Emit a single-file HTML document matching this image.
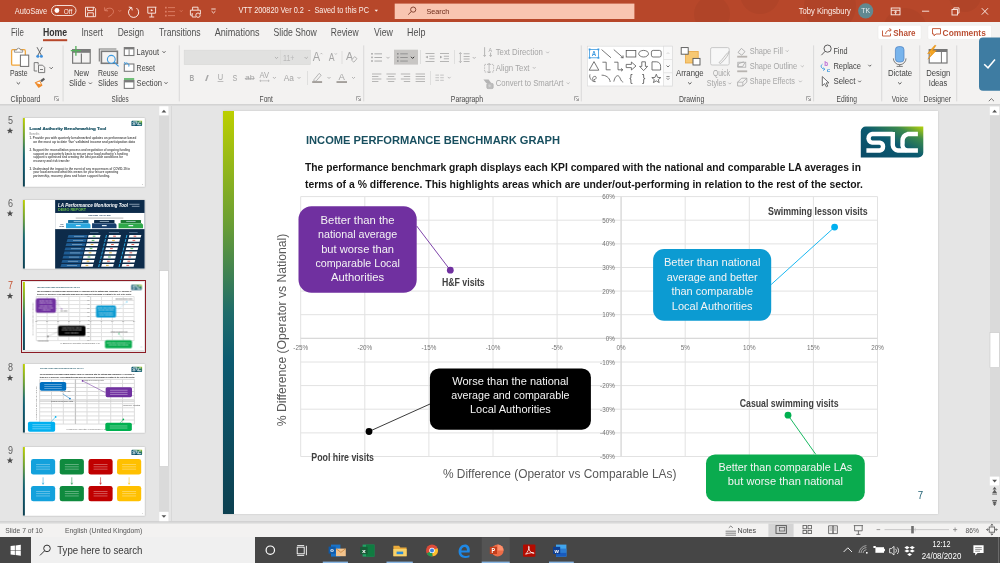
<!DOCTYPE html>
<html><head><meta charset="utf-8"><title>PowerPoint</title><style>
*{margin:0;padding:0;box-sizing:border-box}
html,body{width:1000px;height:563px;overflow:hidden;background:#e5e5e5;font-family:"Liberation Sans", sans-serif}
.a{position:absolute}
svg{position:absolute;overflow:hidden;will-change:transform}
svg text{font-family:"Liberation Sans", sans-serif}
</style></head>
<body>
<div class="a" style="left:0;top:0;width:1000px;height:22px;background:#b7472a"></div>
<div class="a" style="left:0;top:22px;width:1000px;height:82px;background:#f3f2f1"></div>
<div class="a" style="left:0;top:104px;width:1000px;height:1px;background:#d3d3d3"></div>
<div class="a" style="left:0;top:105px;width:1000px;height:1px;background:#dbdbdb"></div>
<div class="a" style="left:0;top:106px;width:1000px;height:415px;background:#e5e5e5"></div>
<div class="a" style="left:159px;top:106px;width:10px;height:415px;background:#dadada"></div>
<div class="a" style="left:171px;top:106px;width:1px;height:415px;background:#d8d8d8"></div>
<div class="a" style="left:989.5px;top:106px;width:10.5px;height:380px;background:#dadada"></div>
<div class="a" style="left:0;top:521px;width:1000px;height:1px;background:#d2d2d2"></div>
<div class="a" style="left:0;top:522px;width:1000px;height:1px;background:#d9d9d9"></div>
<div class="a" style="left:0;top:523px;width:1000px;height:1px;background:#e4e4e3"></div>
<div class="a" style="left:0;top:524px;width:1000px;height:13px;background:#f3f2f1"></div>
<div class="a" style="left:0;top:537px;width:1000px;height:26px;background:#464646"></div>
<div class="a" style="left:31px;top:537px;width:224px;height:26px;background:#f0f0f0"></div>
<svg style="left:0;top:0" width="1000" height="22" viewBox="0 0 1000 22"><g fill="#000" opacity="0.035"><circle cx="712" cy="14" r="18"/><circle cx="760" cy="-6" r="20"/><circle cx="830" cy="6" r="26"/><circle cx="905" cy="30" r="22"/><circle cx="965" cy="-4" r="16"/></g><text x="14.8" y="13.7" font-size="8.84" fill="#fbeee9" textLength="32.4" lengthAdjust="spacingAndGlyphs">AutoSave</text><rect x="51.5" y="5.5" width="24.5" height="10" rx="5" fill="none" stroke="#fbeee9" stroke-width="0.9"/><circle cx="56.9" cy="10.5" r="2.4" fill="#fff"/><text x="63.8" y="13.5" font-size="7.83" fill="#fbeee9" textLength="8.5" lengthAdjust="spacingAndGlyphs">Off</text><g fill="none" stroke="#fbeee9" stroke-width="0.9"><path d="M85.5 7.3H94.2L95.6 8.7V16.7H85.5Z"/><path d="M87.6 7.3V10.5H93.3V7.3"/><path d="M87.6 16.7V12.8H93.3V16.7"/></g><g fill="none" stroke="#dd7f66" stroke-width="1"><path d="M104.9 10.5C107 7.6 112.4 7.2 113.4 10.6C114.2 13.4 110.8 15.6 108.4 16.8"/><path d="M104.6 7.4L104.9 10.6L108 10.9"/></g><path d="M118.5 10.2L119.8 11.5L121.1 10.2" stroke="#dd7f66" stroke-width="0.8" fill="none"/><g fill="none" stroke="#fbeee9" stroke-width="1"><path d="M136.5 8.1A5.1 5.1 0 1 1 131.4 7.7"/><path d="M128.8 7.1L131.7 7.5L132.2 10.4"/></g><g fill="none" stroke="#fbeee9" stroke-width="0.9"><path d="M147 7.2H156.4M147.8 7.2V13.2H155.6V7.2M151.7 13.2V17M149.2 17H154.2"/></g><path d="M150.8 8.9L153.2 10.2L150.8 11.5Z" fill="#fbeee9"/><g fill="#dd7f66"><rect x="165" y="6.8" width="1.7" height="1.7"/><rect x="165" y="10.8" width="1.7" height="1.7"/><rect x="165" y="14.8" width="1.7" height="1.7"/><rect x="168" y="7.2" width="7" height="0.9"/><rect x="168" y="11.2" width="7" height="0.9"/><rect x="168" y="15.2" width="7" height="0.9"/></g><path d="M179.9 10.3L181.2 11.7L182.5 10.3" stroke="#dd7f66" stroke-width="0.8" fill="none"/><g fill="none" stroke="#fbeee9" stroke-width="0.9"><path d="M192.6 10V7.2H198V10"/><path d="M192 15.2H190.4V10.2H200.4V14"/><path d="M192.2 13V17H196"/><circle cx="198" cy="15.2" r="2.2"/></g><g fill="none" stroke="#fbeee9" stroke-width="0.9"><path d="M211.3 9H215.7"/><path d="M211.6 11.2L213.5 13L215.4 11.2"/></g><text x="238.4" y="13.1" font-size="8.26" fill="#fbeee9" textLength="130.6" lengthAdjust="spacingAndGlyphs">VTT 200820 Ver 0.2  -  Saved to this PC</text><path d="M374.6 9.8H378L376.3 11.8Z" fill="#fbeee9"/><rect x="394.7" y="3.6" width="239.7" height="15.4" fill="#f9c5b1"/><g fill="none" stroke="#7c3a28" stroke-width="0.9"><circle cx="413.2" cy="9.6" r="2.6"/><path d="M411.4 11.5L408.2 14.6"/></g><text x="426.4" y="13.6" font-size="8.12" fill="#6d2c1c" textLength="22.9" lengthAdjust="spacingAndGlyphs">Search</text><text x="798.7" y="13.9" font-size="8.41" fill="#fbeee9" textLength="52.1" lengthAdjust="spacingAndGlyphs">Toby Kingsbury</text><circle cx="865.7" cy="10.8" r="7.6" fill="#618991"/><text x="865.7" y="13.3" font-size="7.25" fill="#e8eef0" text-anchor="middle" textLength="8.8" lengthAdjust="spacingAndGlyphs">TK</text><g fill="none" stroke="#fbeee9" stroke-width="0.9"><rect x="891.2" y="8" width="8.8" height="6.8"/><path d="M891.2 10.3H900"/><path d="M895.6 14.6V11.2M894.2 12.5L895.6 11.2L897 12.5"/></g><path d="M922 11.2H929.2" stroke="#fbeee9" stroke-width="0.9"/><g fill="none" stroke="#fbeee9" stroke-width="0.9"><rect x="952" y="9.5" width="5.5" height="5.5"/><path d="M953.8 9.5V7.9H959V13.1H957.5"/></g><path d="M981.8 8.2L988 14.6M988 8.2L981.8 14.6" stroke="#fbeee9" stroke-width="0.95"/></svg>
<svg style="left:0;top:22px" width="1000" height="84" viewBox="0 22 1000 84"><text x="11.0" y="35.8" font-size="10.14" fill="#505050" textLength="12.8" lengthAdjust="spacingAndGlyphs">File</text><text x="42.9" y="35.8" font-size="10.14" fill="#333" font-weight="700" textLength="24.2" lengthAdjust="spacingAndGlyphs">Home</text><text x="81.4" y="35.8" font-size="10.14" fill="#505050" textLength="21.6" lengthAdjust="spacingAndGlyphs">Insert</text><text x="117.7" y="35.8" font-size="10.14" fill="#505050" textLength="26.4" lengthAdjust="spacingAndGlyphs">Design</text><text x="158.9" y="35.8" font-size="10.14" fill="#505050" textLength="41.8" lengthAdjust="spacingAndGlyphs">Transitions</text><text x="214.7" y="35.8" font-size="10.14" fill="#505050" textLength="44.9" lengthAdjust="spacingAndGlyphs">Animations</text><text x="273.6" y="35.8" font-size="10.14" fill="#505050" textLength="43.2" lengthAdjust="spacingAndGlyphs">Slide Show</text><text x="330.8" y="35.8" font-size="10.14" fill="#505050" textLength="27.8" lengthAdjust="spacingAndGlyphs">Review</text><text x="374.0" y="35.8" font-size="10.14" fill="#505050" textLength="18.9" lengthAdjust="spacingAndGlyphs">View</text><text x="407.0" y="35.8" font-size="10.14" fill="#505050" textLength="18.4" lengthAdjust="spacingAndGlyphs">Help</text><rect x="43" y="39.2" width="24.2" height="2" fill="#b7472a"/><rect x="878" y="25.3" width="43.2" height="14.1" fill="#fff" rx="1.5" stroke="#ebe9e7" stroke-width="0.6"/><rect x="927.8" y="25.3" width="63.7" height="14.1" fill="#fff" rx="1.5" stroke="#ebe9e7" stroke-width="0.6"/><g fill="none" stroke="#c0502f" stroke-width="0.9"><path d="M882.5 30.5V36H890.5V33.5"/><path d="M885.5 34C886 31 888 30 891 30M889.5 28.2L891.3 30L889.5 31.8"/></g><text x="893.2" y="35.7" font-size="9.42" fill="#bb4f33" font-weight="700" textLength="22.3" lengthAdjust="spacingAndGlyphs">Share</text><path d="M932.5 28.6H940.5V34H936L934 35.8V34H932.5Z" fill="none" stroke="#c0502f" stroke-width="0.9"/><text x="942.6" y="35.7" font-size="9.42" fill="#bb4f33" font-weight="700" textLength="43.2" lengthAdjust="spacingAndGlyphs">Comments</text><rect x="62.6" y="45.4" width="0.9" height="56" fill="#d6d6d6"/><rect x="178.8" y="45.4" width="0.9" height="56" fill="#d6d6d6"/><rect x="363.3" y="45.4" width="0.9" height="56" fill="#d6d6d6"/><rect x="580.8" y="45.4" width="0.9" height="56" fill="#d6d6d6"/><rect x="813.2" y="45.4" width="0.9" height="56" fill="#d6d6d6"/><rect x="881.3" y="45.4" width="0.9" height="56" fill="#d6d6d6"/><rect x="919.3" y="45.4" width="0.9" height="56" fill="#d6d6d6"/><rect x="956.3" y="45.4" width="0.9" height="56" fill="#d6d6d6"/><text x="10.4" y="101.5" font-size="8.55" fill="#4a4a4a" textLength="30.1" lengthAdjust="spacingAndGlyphs">Clipboard</text><text x="111.6" y="101.5" font-size="8.55" fill="#4a4a4a" textLength="17.1" lengthAdjust="spacingAndGlyphs">Slides</text><text x="259.6" y="101.5" font-size="8.55" fill="#4a4a4a" textLength="13.3" lengthAdjust="spacingAndGlyphs">Font</text><text x="450.8" y="101.5" font-size="8.55" fill="#4a4a4a" textLength="32.2" lengthAdjust="spacingAndGlyphs">Paragraph</text><text x="679.0" y="101.5" font-size="8.55" fill="#4a4a4a" textLength="25.3" lengthAdjust="spacingAndGlyphs">Drawing</text><text x="836.6" y="101.5" font-size="8.55" fill="#4a4a4a" textLength="20.4" lengthAdjust="spacingAndGlyphs">Editing</text><text x="891.7" y="101.5" font-size="8.55" fill="#4a4a4a" textLength="16.2" lengthAdjust="spacingAndGlyphs">Voice</text><text x="923.6" y="101.5" font-size="8.55" fill="#4a4a4a" textLength="27.4" lengthAdjust="spacingAndGlyphs">Designer</text><g fill="none" stroke="#8a8a8a" stroke-width="0.7"><path d="M54.5 100.5V96.5H58.5"/><path d="M55.7 97.7L58.5 100.5M58.5 98.3V100.5H56.3"/></g><g fill="none" stroke="#8a8a8a" stroke-width="0.7"><path d="M356.5 100.5V96.5H360.5"/><path d="M357.7 97.7L360.5 100.5M360.5 98.3V100.5H358.3"/></g><g fill="none" stroke="#8a8a8a" stroke-width="0.7"><path d="M574.5 100.5V96.5H578.5"/><path d="M575.7 97.7L578.5 100.5M578.5 98.3V100.5H576.3"/></g><g fill="none" stroke="#8a8a8a" stroke-width="0.7"><path d="M806.5 100.5V96.5H810.5"/><path d="M807.7 97.7L810.5 100.5M810.5 98.3V100.5H808.3"/></g><rect x="11.6" y="49.7" width="13.7" height="15.4" rx="1.2" fill="#fff" stroke="#f0a53a" stroke-width="1.3"/><path d="M14.4 52.2V50H16.8A1.8 1.8 0 0 1 20.4 50H22.7V52.2Z" fill="#fff" stroke="#8a8a8a" stroke-width="0.9"/><rect x="20.4" y="55.1" width="8.3" height="11.3" fill="#fff" stroke="#6e6e6e" stroke-width="1"/><text x="9.9" y="76.0" font-size="8.26" fill="#444444" textLength="17.7" lengthAdjust="spacingAndGlyphs">Paste</text><path d="M16.7 82.4L18.4 84.0L20.1 82.4" stroke="#444444" stroke-width="0.9" fill="none"/><g fill="none" stroke="#5a5a5a" stroke-width="0.9"><path d="M37 47.2L41.2 55M42.2 47.2L38 55"/></g><circle cx="37.8" cy="56.2" r="1.5" fill="#3d8fdc"/><circle cx="41.4" cy="56.2" r="1.5" fill="#3d8fdc"/><g fill="none" stroke="#6e6e6e" stroke-width="0.9"><path d="M38.2 64.5V62.6H34.2V71H37.2"/><path d="M38.5 65.2H42.6L44.7 67.3V72.6H38.5Z"/><path d="M40 69.5H43"/></g><path d="M49.6 67.2L51.2 68.8L52.8 67.2" stroke="#444444" stroke-width="0.8" fill="none"/><path d="M34.6 82.6L39.8 80.3L42.5 85.5L38.6 88Z" fill="#f08a28"/><path d="M36.2 83L39.4 81.6L41 84.6Z" fill="#fff"/><path d="M40.2 80.2L43.8 77.8L45 79.4L41.6 82.2Z" fill="#5a5a5a"/><g fill="none" stroke="#7a7a7a" stroke-width="1.2"><rect x="72.6" y="49.6" width="17.6" height="13.6"/><path d="M81.4 53.6V63.2"/></g><rect x="72.6" y="49.6" width="17.6" height="3.2" fill="#7a7a7a"/><path d="M70.8 50.6H81M75.9 46V55.8" stroke="#52b05a" stroke-width="1.3"/><text x="73.9" y="75.8" font-size="8.26" fill="#444444" textLength="15.1" lengthAdjust="spacingAndGlyphs">New</text><text x="69.0" y="86.2" font-size="8.26" fill="#444444" textLength="16.9" lengthAdjust="spacingAndGlyphs">Slide</text><path d="M88.9 82.5L90.4 84.0L91.9 82.5" stroke="#444444" stroke-width="0.8" fill="none"/><path d="M99.3 61.5V49H116.4" fill="none" stroke="#7a7a7a" stroke-width="1.1"/><rect x="101.4" y="51.3" width="16" height="12" fill="none" stroke="#7a7a7a" stroke-width="1.6"/><circle cx="111.3" cy="59.3" r="3.9" fill="#f3f2f1" stroke="#3c9ae0" stroke-width="1.1"/><path d="M114.1 62.1L118.6 66.4" stroke="#3c9ae0" stroke-width="1.1"/><text x="98.0" y="75.8" font-size="8.26" fill="#444444" textLength="20.0" lengthAdjust="spacingAndGlyphs">Reuse</text><text x="98.0" y="86.2" font-size="8.26" fill="#444444" textLength="20.0" lengthAdjust="spacingAndGlyphs">Slides</text><rect x="124.3" y="47.6" width="9.6" height="7.9" fill="#fff" stroke="#7a7a7a" stroke-width="1.1"/><rect x="124.3" y="47.6" width="9.6" height="1.8" fill="#7a7a7a"/><path d="M129.1 49.4V55" stroke="#7a7a7a" stroke-width="0.9"/><text x="136.6" y="55.3" font-size="8.41" fill="#444444" textLength="22.4" lengthAdjust="spacingAndGlyphs">Layout</text><path d="M162.5 51.2L164.0 52.8L165.5 51.2" stroke="#444444" stroke-width="0.8" fill="none"/><rect x="124.3" y="64" width="9.6" height="7.3" fill="#fff" stroke="#7a7a7a" stroke-width="1.1"/><path d="M125 63.4A2.6 2.6 0 0 1 128.8 66.6" fill="none" stroke="#3c9ae0" stroke-width="1"/><path d="M124 62.2L125.6 63.6L124.6 65" fill="none" stroke="#3c9ae0" stroke-width="0.9"/><text x="136.6" y="70.9" font-size="8.41" fill="#444444" textLength="18.4" lengthAdjust="spacingAndGlyphs">Reset</text><rect x="124" y="78.1" width="10.2" height="1.8" fill="#62b96b"/><rect x="124.3" y="80.6" width="9.6" height="7.8" fill="#fff" stroke="#7a7a7a" stroke-width="1.1"/><rect x="124.3" y="80.6" width="9.6" height="1.8" fill="#7a7a7a"/><text x="136.6" y="86.4" font-size="8.41" fill="#444444" textLength="25.4" lengthAdjust="spacingAndGlyphs">Section</text><path d="M164.5 82.2L166.0 83.8L167.5 82.2" stroke="#444444" stroke-width="0.8" fill="none"/><rect x="184.2" y="50.2" width="96.3" height="14.4" fill="#e1e1e0" stroke="#d8d8d6" stroke-width="0.6"/><rect x="280.5" y="50.2" width="29.8" height="14.4" fill="#e1e1e0" stroke="#d8d8d6" stroke-width="0.6"/><path d="M274.9 57.0L276.5 58.6L278.1 57.0" stroke="#a6a6a6" stroke-width="0.8" fill="none"/><text x="283.0" y="60.6" font-size="8.70" fill="#b8b8b8" textLength="11.5" lengthAdjust="spacingAndGlyphs">11+</text><path d="M304.6 57.0L306.2 58.6L307.8 57.0" stroke="#a6a6a6" stroke-width="0.8" fill="none"/><text x="312.8" y="60.7" font-size="12.32" fill="#a6a6a6" textLength="7.4" lengthAdjust="spacingAndGlyphs">A</text><path d="M320.4 54.2L321.4 53.2L322.4 54.2" stroke="#a6a6a6" stroke-width="0.7" fill="none"/><text x="328.8" y="60.7" font-size="10.00" fill="#a6a6a6" textLength="5.8" lengthAdjust="spacingAndGlyphs">A</text><path d="M334.8 53.4L335.8 54.4L336.8 53.4" stroke="#a6a6a6" stroke-width="0.7" fill="none"/><rect x="341.6" y="51" width="0.8" height="13" fill="#dadada"/><text x="346.0" y="60.4" font-size="11.59" fill="#a6a6a6" textLength="7.0" lengthAdjust="spacingAndGlyphs">A</text><path d="M351.5 60.2L354.6 56.6L357 58.6L353.9 62.2Z" fill="#f3f2f1" stroke="#a6a6a6" stroke-width="0.8"/><text x="189.5" y="80.7" font-size="9.13" fill="#a6a6a6" font-weight="700" textLength="4.7" lengthAdjust="spacingAndGlyphs">B</text><text x="204.6" y="80.7" font-size="9.13" fill="#a6a6a6" textLength="4.4" lengthAdjust="spacingAndGlyphs" font-style="italic">I</text><text x="217.8" y="80.0" font-size="8.41" fill="#a6a6a6" textLength="5.4" lengthAdjust="spacingAndGlyphs">U</text><rect x="217.6" y="81.3" width="5.8" height="0.7" fill="#a6a6a6"/><text x="232.4" y="80.7" font-size="9.13" fill="#a6a6a6" textLength="4.8" lengthAdjust="spacingAndGlyphs">S</text><text x="245.0" y="80.4" font-size="7.83" fill="#a6a6a6" textLength="9.6" lengthAdjust="spacingAndGlyphs">ab</text><rect x="244.8" y="78" width="9.9" height="0.7" fill="#a6a6a6"/><text x="259.6" y="78.2" font-size="8.41" fill="#a6a6a6" textLength="9.6" lengthAdjust="spacingAndGlyphs">AV</text><path d="M259.8 80.8H269.2M261 79.8L259.8 80.8L261 81.8M268 79.8L269.2 80.8L268 81.8" stroke="#a6a6a6" stroke-width="0.6" fill="none"/><path d="M272.9 77.0L274.4 78.5L275.9 77.0" stroke="#a6a6a6" stroke-width="0.8" fill="none"/><text x="283.7" y="80.6" font-size="8.70" fill="#a6a6a6" textLength="10.2" lengthAdjust="spacingAndGlyphs">Aa</text><path d="M297.5 77.0L299.0 78.5L300.5 77.0" stroke="#a6a6a6" stroke-width="0.8" fill="none"/><rect x="307.2" y="71" width="0.8" height="14" fill="#dadada"/><path d="M314 79.6L319.2 73.4L321.2 75.2L316 81.2H313.8Z" fill="none" stroke="#a6a6a6" stroke-width="0.8"/><rect x="312.2" y="81.1" width="9.9" height="1.9" fill="#a39f9b"/><path d="M327.5 77.0L329.0 78.5L330.5 77.0" stroke="#a6a6a6" stroke-width="0.8" fill="none"/><text x="338.4" y="79.8" font-size="9.86" fill="#a6a6a6" textLength="6.4" lengthAdjust="spacingAndGlyphs">A</text><rect x="336.5" y="81.1" width="10.5" height="1.9" fill="#a39f9b"/><path d="M352.0 77.0L353.5 78.5L355.0 77.0" stroke="#a6a6a6" stroke-width="0.8" fill="none"/><rect x="371.2" y="53.0" width="1.6" height="1.6" fill="#a6a6a6"/><rect x="374.4" y="53.4" width="7.6" height="0.9" fill="#a6a6a6"/><rect x="371.2" y="56.6" width="1.6" height="1.6" fill="#a6a6a6"/><rect x="374.4" y="57.0" width="7.6" height="0.9" fill="#a6a6a6"/><rect x="371.2" y="60.2" width="1.6" height="1.6" fill="#a6a6a6"/><rect x="374.4" y="60.6" width="7.6" height="0.9" fill="#a6a6a6"/><path d="M386.5 56.9L388.0 58.4L389.5 56.9" stroke="#a6a6a6" stroke-width="0.8" fill="none"/><rect x="394" y="49.7" width="24" height="14.9" fill="#c8c6c4"/><rect x="397" y="53.0" width="1.6" height="1.6" fill="#8e8e8e"/><rect x="400.2" y="53.4" width="7.6" height="0.9" fill="#8e8e8e"/><rect x="397" y="56.6" width="1.6" height="1.6" fill="#8e8e8e"/><rect x="400.2" y="57.0" width="7.6" height="0.9" fill="#8e8e8e"/><rect x="397" y="60.2" width="1.6" height="1.6" fill="#8e8e8e"/><rect x="400.2" y="60.6" width="7.6" height="0.9" fill="#8e8e8e"/><path d="M411.0 56.8L412.6 58.4L414.2 56.8" stroke="#333" stroke-width="1.0" fill="none"/><rect x="420" y="50" width="0.8" height="14" fill="#dadada"/><rect x="425.5" y="53.2" width="9" height="0.8" fill="#a6a6a6"/><rect x="429.3" y="55.8" width="5.2" height="0.8" fill="#a6a6a6"/><rect x="429.3" y="58.4" width="5.2" height="0.8" fill="#a6a6a6"/><rect x="425.5" y="61.0" width="9" height="0.8" fill="#a6a6a6"/><path d="M427.9 55.800000000000004L425.5 57.1L427.9 58.400000000000006Z" fill="#a6a6a6"/><rect x="440.0" y="53.2" width="9" height="0.8" fill="#a6a6a6"/><rect x="443.8" y="55.8" width="5.2" height="0.8" fill="#a6a6a6"/><rect x="443.8" y="58.4" width="5.2" height="0.8" fill="#a6a6a6"/><rect x="440.0" y="61.0" width="9" height="0.8" fill="#a6a6a6"/><path d="M440 55.800000000000004L442.4 57.1L440 58.400000000000006Z" fill="#a6a6a6"/><rect x="454.2" y="50" width="0.8" height="14" fill="#dadada"/><path d="M460.4 52.6V62.6M459 54L460.4 52.6L461.8 54M459 61.2L460.4 62.6L461.8 61.2" stroke="#a6a6a6" stroke-width="0.7" fill="none"/><rect x="463.6" y="53.4" width="6" height="0.8" fill="#a6a6a6"/><rect x="463.6" y="56.0" width="6" height="0.8" fill="#a6a6a6"/><rect x="463.6" y="58.6" width="6" height="0.8" fill="#a6a6a6"/><rect x="463.6" y="61.2" width="6" height="0.8" fill="#a6a6a6"/><path d="M472.7 57.0L474.2 58.5L475.7 57.0" stroke="#a6a6a6" stroke-width="0.8" fill="none"/><path d="M484.6 47.2V56.4M483.4 55.2L484.6 56.4L485.8 55.2M490.6 52.6V56.4M489.4 55.2L490.6 56.4L491.8 55.2" stroke="#a6a6a6" stroke-width="0.8" fill="none"/><text x="488.6" y="51.8" font-size="6.09" fill="#a6a6a6" textLength="3.6" lengthAdjust="spacingAndGlyphs">A</text><text x="495.7" y="55.1" font-size="8.55" fill="#a6a6a6" textLength="47.1" lengthAdjust="spacingAndGlyphs">Text Direction</text><path d="M546.2 51.7L547.6 53.1L549.0 51.7" stroke="#a6a6a6" stroke-width="0.7" fill="none"/><g fill="none" stroke="#a6a6a6" stroke-width="0.7"><rect x="484.6" y="64.4" width="9" height="7.6" stroke-dasharray="1.4 1"/><path d="M489.1 63.4V73M487.9 64.6L489.1 63.4L490.3 64.6M487.9 71.8L489.1 73L490.3 71.8"/></g><text x="495.7" y="70.7" font-size="8.55" fill="#a6a6a6" textLength="33.8" lengthAdjust="spacingAndGlyphs">Align Text</text><path d="M532.8 67.1L534.2 68.5L535.6 67.1" stroke="#a6a6a6" stroke-width="0.7" fill="none"/><path d="M483.4 79.6H488.6L491.4 83.2H486.4Z" fill="#b4b4b4"/><rect x="486.8" y="83.4" width="6.4" height="5.2" rx="1.2" fill="#bdbdbd" stroke="#a6a6a6" stroke-width="0.6"/><circle cx="489.6" cy="85.8" r="1.2" fill="#d0d0d0"/><text x="495.7" y="86.1" font-size="8.55" fill="#a6a6a6" textLength="67.8" lengthAdjust="spacingAndGlyphs">Convert to SmartArt</text><path d="M566.8 82.5L568.2 83.9L569.6 82.5" stroke="#a6a6a6" stroke-width="0.7" fill="none"/><rect x="372.0" y="73.6" width="9.4" height="0.8" fill="#a6a6a6"/><rect x="372.0" y="76.1" width="6.4" height="0.8" fill="#a6a6a6"/><rect x="372.0" y="78.6" width="9.4" height="0.8" fill="#a6a6a6"/><rect x="372.0" y="81.1" width="6.4" height="0.8" fill="#a6a6a6"/><rect x="386.4" y="73.6" width="9.4" height="0.8" fill="#a6a6a6"/><rect x="387.9" y="76.1" width="6.4" height="0.8" fill="#a6a6a6"/><rect x="386.4" y="78.6" width="9.4" height="0.8" fill="#a6a6a6"/><rect x="387.9" y="81.1" width="6.4" height="0.8" fill="#a6a6a6"/><rect x="400.8" y="73.6" width="9.4" height="0.8" fill="#a6a6a6"/><rect x="403.8" y="76.1" width="6.4" height="0.8" fill="#a6a6a6"/><rect x="400.8" y="78.6" width="9.4" height="0.8" fill="#a6a6a6"/><rect x="403.8" y="81.1" width="6.4" height="0.8" fill="#a6a6a6"/><rect x="415.6" y="73.6" width="9.4" height="0.8" fill="#a6a6a6"/><rect x="415.6" y="76.1" width="9.4" height="0.8" fill="#a6a6a6"/><rect x="415.6" y="78.6" width="9.4" height="0.8" fill="#a6a6a6"/><rect x="415.6" y="81.1" width="9.4" height="0.8" fill="#a6a6a6"/><rect x="430" y="71" width="0.8" height="14" fill="#dadada"/><g fill="#c4c4c4"><rect x="435.4" y="74.6" width="3.6" height="1"/><rect x="440.2" y="74.6" width="3.6" height="1"/><rect x="435.4" y="77.2" width="3.6" height="1"/><rect x="440.2" y="77.2" width="3.6" height="1"/><rect x="435.4" y="79.8" width="3.6" height="1"/><rect x="440.2" y="79.8" width="3.6" height="1"/></g><path d="M447.8 76.9L449.2 78.3L450.6 76.9" stroke="#a6a6a6" stroke-width="0.7" fill="none"/><rect x="587.4" y="46.2" width="85" height="39.8" fill="#fff" stroke="#dcdcdc" stroke-width="0.7"/><rect x="663.6" y="46.2" width="8.8" height="39.8" fill="#fafafa" stroke="#dcdcdc" stroke-width="0.7"/><path d="M663.6 59.5H672.4M663.6 72.7H672.4" stroke="#dcdcdc" stroke-width="0.7"/><path d="M666.6 54L668 52.6L669.4 54" stroke="#c8c8c8" stroke-width="0.7" fill="none"/><path d="M666.5 65.5L668.0 67.0L669.5 65.5" stroke="#555" stroke-width="0.8" fill="none"/><path d="M666.4 76.6H669.6M666.6 78.2L668 79.6L669.4 78.2" stroke="#555" stroke-width="0.7" fill="none"/><rect x="589.6" y="49.4" width="8.8" height="8.4" fill="none" stroke="#3c9ae0" stroke-width="0.8"/><rect x="588.7" y="48.5" width="1.8" height="1.8" fill="#3c9ae0"/><rect x="597.5" y="48.5" width="1.8" height="1.8" fill="#3c9ae0"/><rect x="588.7" y="56.9" width="1.8" height="1.8" fill="#3c9ae0"/><rect x="597.5" y="56.9" width="1.8" height="1.8" fill="#3c9ae0"/><text x="591.8" y="56.2" font-size="6.96" fill="#3c9ae0" font-weight="700" textLength="4.4" lengthAdjust="spacingAndGlyphs">A</text><path d="M601.6 49.6L611 57.8" stroke="#555" stroke-width="0.8"/><path d="M613.8 49.6L623.2 57.8M620.8 57.6L623.2 57.8L623 55.4" stroke="#555" stroke-width="0.8" fill="none"/><rect x="626.2" y="50.4" width="9.6" height="6.6" fill="none" stroke="#555" stroke-width="0.8"/><ellipse cx="643.6" cy="53.7" rx="4.9" ry="3.3" fill="none" stroke="#555" stroke-width="0.8"/><rect x="651.4" y="50.4" width="9.8" height="6.6" rx="1.8" fill="none" stroke="#555" stroke-width="0.8"/><path d="M594 61.6L598.8 70.2H589.2Z" fill="none" stroke="#555" stroke-width="0.8"/><path d="M602.4 62.2H606.2V69.8H610.6" fill="none" stroke="#555" stroke-width="0.8"/><path d="M614.2 62.2H618V69.8H622.8M621 68.4L622.8 69.8L621 71.2" fill="none" stroke="#555" stroke-width="0.8"/><path d="M626.2 64.4H631.4V62L636 66L631.4 70V67.6H626.2Z" fill="none" stroke="#555" stroke-width="0.8"/><path d="M641.8 61.8H645.4V66.4H647.6L643.6 70.6L639.6 66.4H641.8Z" fill="none" stroke="#555" stroke-width="0.8"/><path d="M652 70V61.8H656.6A4.2 4.2 0 0 1 660.6 66.4V70Z" fill="none" stroke="#555" stroke-width="0.8"/><path d="M590 74.4C588.6 78 592.2 82 595.4 81.6C592.4 80.2 591.2 77.4 594.6 76.4C597 76 596.6 79.6 594 79.6" fill="none" stroke="#555" stroke-width="0.8"/><path d="M601.6 75.2C605.4 75 609.8 77.4 610.2 82" fill="none" stroke="#555" stroke-width="0.8"/><path d="M613.8 81.6C615.4 74.6 618.6 74.4 620 78C621 80.6 622 82 623.2 82" fill="none" stroke="#555" stroke-width="0.8"/><text x="629.2" y="81.6" font-size="10.14" fill="#555" textLength="3.4" lengthAdjust="spacingAndGlyphs">{</text><text x="642.0" y="81.6" font-size="10.14" fill="#555" textLength="3.4" lengthAdjust="spacingAndGlyphs">}</text><path d="M656.3 74.2L657.6 77.4L660.8 77.6L658.3 79.6L659.2 82.6L656.3 80.9L653.4 82.6L654.3 79.6L651.8 77.6L655 77.4Z" fill="none" stroke="#555" stroke-width="0.8"/><rect x="685.6" y="51.4" width="12.6" height="11.6" fill="#f7c873" stroke="#e9a640" stroke-width="0.8"/><rect x="681.2" y="47.6" width="7" height="6.6" fill="#fff" stroke="#555" stroke-width="0.9"/><rect x="693" y="58.4" width="7" height="6.6" fill="#fff" stroke="#555" stroke-width="0.9"/><text x="676.0" y="75.9" font-size="8.41" fill="#444444" textLength="27.6" lengthAdjust="spacingAndGlyphs">Arrange</text><path d="M688.1 82.4L689.8 84.0L691.5 82.4" stroke="#444444" stroke-width="0.9" fill="none"/><rect x="710.6" y="47.6" width="18.6" height="17.4" rx="1.5" fill="#f7f7f7" stroke="#c4c4c4" stroke-width="0.9"/><path d="M719 62.6L722 59.6C724 57 727 53 729.2 51.4C728.6 54.6 725.6 58.8 723.2 61L720.6 63.6Z" fill="#f3f2f1" stroke="#b4b4b4" stroke-width="0.8"/><text x="713.0" y="75.9" font-size="8.41" fill="#a6a6a6" textLength="17.0" lengthAdjust="spacingAndGlyphs">Quick</text><text x="706.7" y="86.2" font-size="8.41" fill="#a6a6a6" textLength="19.4" lengthAdjust="spacingAndGlyphs">Styles</text><path d="M728.4 82.7L729.8 84.1L731.2 82.7" stroke="#a6a6a6" stroke-width="0.7" fill="none"/><path d="M738 52.4L741.4 48.4L745 51.6L741.8 55.2Z" fill="none" stroke="#a6a6a6" stroke-width="0.8"/><rect x="737.2" y="55.8" width="10" height="1.8" fill="#b8b4b0"/><text x="749.7" y="53.8" font-size="8.55" fill="#a6a6a6" textLength="33.1" lengthAdjust="spacingAndGlyphs">Shape Fill</text><path d="M785.8 50.3L787.2 51.7L788.6 50.3" stroke="#a6a6a6" stroke-width="0.7" fill="none"/><path d="M737.8 66.6L738.6 63.6L743.4 62L744.6 63.2L742.6 66.6Z" fill="none" stroke="#a6a6a6" stroke-width="0.8"/><rect x="737.8" y="62.2" width="8" height="5" fill="none" stroke="#a6a6a6" stroke-width="0.7"/><rect x="737.2" y="70.4" width="10" height="1.8" fill="#b8b4b0"/><text x="749.7" y="68.9" font-size="8.55" fill="#a6a6a6" textLength="47.5" lengthAdjust="spacingAndGlyphs">Shape Outline</text><path d="M801.0 65.5L802.4 66.9L803.8 65.5" stroke="#a6a6a6" stroke-width="0.7" fill="none"/><path d="M737.6 82.2L741.6 78.2H746.8V82L742.8 86H737.6Z" fill="none" stroke="#a6a6a6" stroke-width="0.8"/><path d="M737.6 82.2H742.8V86M742.8 82.2L746.8 78.2" stroke="#a6a6a6" stroke-width="0.7" fill="none"/><text x="749.7" y="84.1" font-size="8.55" fill="#a6a6a6" textLength="45.1" lengthAdjust="spacingAndGlyphs">Shape Effects</text><path d="M799.0 80.7L800.4 82.1L801.8 80.7" stroke="#a6a6a6" stroke-width="0.7" fill="none"/><g fill="none" stroke="#555" stroke-width="0.95"><circle cx="827.6" cy="48.6" r="3.6"/><path d="M825 51.4L821.4 55.2"/></g><text x="833.4" y="54.3" font-size="8.55" fill="#444444" textLength="14.2" lengthAdjust="spacingAndGlyphs">Find</text><text x="824.2" y="65.8" font-size="6.96" fill="#b868d4" font-weight="700" textLength="3.8" lengthAdjust="spacingAndGlyphs">b</text><path d="M822.4 64.2C820.4 65.4 820.6 68.6 824.6 69.2M823.4 67.8L824.8 69.2L823.4 70.6" fill="none" stroke="#3c9ae0" stroke-width="1"/><text x="826.8" y="71.6" font-size="5.22" fill="#3c9ae0" font-weight="700" textLength="3.4" lengthAdjust="spacingAndGlyphs">c</text><text x="833.4" y="69.1" font-size="8.55" fill="#444444" textLength="27.6" lengthAdjust="spacingAndGlyphs">Replace</text><path d="M868.3 64.8L869.8 66.3L871.3 64.8" stroke="#444444" stroke-width="0.8" fill="none"/><path d="M822.3 76.6V85.8L824.6 83.6L826.4 86.8L827.8 86.1L826.1 82.9H829Z" fill="#fff" stroke="#555" stroke-width="0.85"/><text x="833.4" y="84.3" font-size="8.55" fill="#444444" textLength="22.0" lengthAdjust="spacingAndGlyphs">Select</text><path d="M858.2 80.7L859.6 82.1L861.0 80.7" stroke="#444444" stroke-width="0.8" fill="none"/><rect x="895.4" y="46.6" width="8.6" height="15.4" rx="3.2" fill="#78b4ec" stroke="#4a7fc0" stroke-width="0.7"/><path d="M893.4 58.4A6.2 6.2 0 0 0 906 58.4M899.7 64.6V66.4M896.6 66.4H902.8" fill="none" stroke="#6e6e6e" stroke-width="0.9"/><text x="888.0" y="75.9" font-size="8.41" fill="#444444" textLength="24.2" lengthAdjust="spacingAndGlyphs">Dictate</text><path d="M898.1 82.4L899.8 84.0L901.5 82.4" stroke="#444444" stroke-width="0.9" fill="none"/><rect x="929.2" y="49.6" width="17.8" height="13.4" fill="#fff" stroke="#777" stroke-width="1.2"/><rect x="929.2" y="49.6" width="17.8" height="2.4" fill="#777"/><path d="M941.4 52V63" stroke="#777" stroke-width="1"/><path d="M934.6 45.4L927.6 53.6H931.2L928 59.2L936.4 50.4H932.6L936 45.4Z" fill="#f5a623" stroke="#e0860c" stroke-width="0.5"/><text x="926.3" y="75.9" font-size="8.41" fill="#444444" textLength="23.9" lengthAdjust="spacingAndGlyphs">Design</text><text x="928.8" y="86.2" font-size="8.41" fill="#444444" textLength="18.4" lengthAdjust="spacingAndGlyphs">Ideas</text><path d="M983 37.5H1000V90.7H983A4 4 0 0 1 979 86.7V41.5A4 4 0 0 1 983 37.5Z" fill="#3e7ca2"/><path d="M984.2 64.2L988 67.8L995 59.6" fill="none" stroke="#fff" stroke-width="1.5"/><path d="M988.8 101.2L991.4 98.6L994 101.2" fill="none" stroke="#555" stroke-width="0.8"/></svg>
<svg style="left:0;top:106px" width="1000" height="416" viewBox="0 106 1000 416"><rect x="159.2" y="106.2" width="9.4" height="9.2" fill="#fff"/><path d="M161.5 112.4L163.9 109.8L166.3 112.4Z" fill="#555"/><rect x="159.4" y="270.6" width="9" height="196" fill="#fff" stroke="#c8c8c8" stroke-width="0.6"/><rect x="159.2" y="511.8" width="9.4" height="9.4" fill="#fff"/><path d="M161.5 515.2L163.9 517.8L166.3 515.2Z" fill="#555"/><rect x="989.8" y="106.4" width="9.6" height="8.8" fill="#fff"/><path d="M992.2 112.4L994.6 109.8L997 112.4Z" fill="#555"/><rect x="990" y="332.6" width="9.4" height="35" fill="#fff" stroke="#c8c8c8" stroke-width="0.6"/><rect x="989.8" y="476.6" width="9.6" height="9" fill="#fff"/><path d="M992.2 479.8L994.6 482.4L997 479.8Z" fill="#555"/><g fill="#5a5a5a"><path d="M994.6 486.8L996.6 489.6H992.6Z"/><path d="M994.6 489.6L997 493H992.2Z"/><rect x="992.2" y="493.6" width="4.8" height="0.9"/><rect x="992.2" y="500" width="4.8" height="0.9"/><path d="M992.2 501.4H997L994.6 504.4Z"/><path d="M992.6 503.4H996.6L994.6 506Z"/></g><text x="10.4" y="124.0" font-size="10.87" fill="#606060" text-anchor="middle" textLength="5.0" lengthAdjust="spacingAndGlyphs">5</text><path d="M10 127.4L10.9 129.8L13.3 129.9L11.4 131.3L12.1 133.6L10 132.3L7.9 133.6L8.6 131.3L6.7 129.9L9.1 129.8Z" fill="#4a4a4a"/><text x="10.4" y="206.6" font-size="10.87" fill="#606060" text-anchor="middle" textLength="5.0" lengthAdjust="spacingAndGlyphs">6</text><path d="M10 210.0L10.9 212.4L13.3 212.5L11.4 213.9L12.1 216.2L10 214.9L7.9 216.2L8.6 213.9L6.7 212.5L9.1 212.4Z" fill="#4a4a4a"/><text x="10.4" y="289.1" font-size="10.87" fill="#c4502e" text-anchor="middle" textLength="5.0" lengthAdjust="spacingAndGlyphs">7</text><path d="M10 292.5L10.9 294.9L13.3 295.0L11.4 296.4L12.1 298.7L10 297.4L7.9 298.7L8.6 296.4L6.7 295.0L9.1 294.9Z" fill="#4a4a4a"/><text x="10.4" y="371.1" font-size="10.87" fill="#606060" text-anchor="middle" textLength="5.0" lengthAdjust="spacingAndGlyphs">8</text><path d="M10 374.5L10.9 376.9L13.3 377.0L11.4 378.4L12.1 380.7L10 379.4L7.9 380.7L8.6 378.4L6.7 377.0L9.1 376.9Z" fill="#4a4a4a"/><text x="10.4" y="453.6" font-size="10.87" fill="#606060" text-anchor="middle" textLength="5.0" lengthAdjust="spacingAndGlyphs">9</text><path d="M10 457.0L10.9 459.4L13.3 459.5L11.4 460.9L12.1 463.2L10 461.9L7.9 463.2L8.6 460.9L6.7 459.5L9.1 459.4Z" fill="#4a4a4a"/></svg>
<svg style="left:223px;top:111px;box-shadow:0 0 2px rgba(0,0,0,.15)" width="715" height="403" viewBox="0 0 715 403"><defs>
<linearGradient id="gbar" x1="0" y1="0" x2="0" y2="1">
<stop offset="0" stop-color="#bccf00"/><stop offset="0.28" stop-color="#6a9e34"/><stop offset="0.5" stop-color="#1f6c6a"/><stop offset="0.62" stop-color="#0c5a70"/><stop offset="1" stop-color="#0d4050"/>
</linearGradient>
<linearGradient id="glogo" x1="0" y1="1" x2="1" y2="0">
<stop offset="0" stop-color="#0b4a66"/><stop offset="0.5" stop-color="#0b5a70"/><stop offset="0.78" stop-color="#3c8a4c"/><stop offset="1" stop-color="#b8d40a"/>
</linearGradient>
<g id="logo"><path d="M5 0H62.5V26A5 5 0 0 1 57.5 31H0V5A5 5 0 0 1 5 0Z" fill="url(#glogo)"/><path d="M31.97 7.55H11.37A3.96 3.96 0 0 0 7.82 11.72A3.96 3.96 0 0 0 11.37 16.16H18.92A3.96 3.96 0 0 1 18.92 23.98H5.60" stroke="#fff" stroke-width="4.4" fill="none"/><path d="M31.97 5.51V18.65A5.72 5.72 0 0 0 37.12 23.98H57.10" stroke="#fff" stroke-width="4.4" fill="none"/><path d="M57.10 7.55H46.89A7.04 7.04 0 0 0 41.74 14.21V16.87A6.16 6.16 0 0 0 46.00 23.98" stroke="#fff" stroke-width="4.4" fill="none"/></g></defs><g id="s7"><g transform="translate(-223,-111)"><rect x="223" y="111" width="715" height="403" fill="#fff"/><rect x="223" y="111" width="11" height="403" fill="url(#gbar)"/><text x="306.0" y="143.8" font-size="11.59" fill="#184f5f" font-weight="700" textLength="254.0" lengthAdjust="spacingAndGlyphs">INCOME PERFORMANCE BENCHMARK GRAPH</text><text x="305.0" y="170.5" font-size="10.72" fill="#161616" font-weight="700" textLength="556.0" lengthAdjust="spacingAndGlyphs">The performance benchmark graph displays each KPI compared with the national and comparable LA averages in</text><text x="305.0" y="187.5" font-size="10.72" fill="#161616" font-weight="700" textLength="558.0" lengthAdjust="spacingAndGlyphs">terms of a % difference. This highlights areas which are under/out-performing in relation to the rest of the sector.</text><path d="M300.7 196.6V456.5M364.8 196.6V456.5M428.9 196.6V456.5M493.0 196.6V456.5M557.1 196.6V456.5M621.1 196.6V456.5M685.2 196.6V456.5M749.3 196.6V456.5M813.4 196.6V456.5M877.5 196.6V456.5M300.7 196.6H877.5M300.7 220.2H877.5M300.7 243.9H877.5M300.7 267.5H877.5M300.7 291.1H877.5M300.7 314.7H877.5M300.7 338.4H877.5M300.7 362.0H877.5M300.7 385.6H877.5M300.7 409.2H877.5M300.7 432.9H877.5M300.7 456.5H877.5" stroke="#e2e2e2" stroke-width="1" fill="none" vector-effect="non-scaling-stroke"/><path d="M621.1 196.6V456.5M300.7 338.4H877.5" stroke="#d9d9d9" stroke-width="1.1" fill="none" vector-effect="non-scaling-stroke"/><text x="614.8" y="199.1" font-size="6.30" fill="#747474" text-anchor="end">60%</text><text x="614.8" y="222.7" font-size="6.30" fill="#747474" text-anchor="end">50%</text><text x="614.8" y="246.4" font-size="6.30" fill="#747474" text-anchor="end">40%</text><text x="614.8" y="270.0" font-size="6.30" fill="#747474" text-anchor="end">30%</text><text x="614.8" y="293.6" font-size="6.30" fill="#747474" text-anchor="end">20%</text><text x="614.8" y="317.2" font-size="6.30" fill="#747474" text-anchor="end">10%</text><text x="614.8" y="340.9" font-size="6.30" fill="#747474" text-anchor="end">0%</text><text x="614.8" y="364.5" font-size="6.30" fill="#747474" text-anchor="end">-10%</text><text x="614.8" y="388.1" font-size="6.30" fill="#747474" text-anchor="end">-20%</text><text x="614.8" y="411.7" font-size="6.30" fill="#747474" text-anchor="end">-30%</text><text x="614.8" y="435.4" font-size="6.30" fill="#747474" text-anchor="end">-40%</text><text x="614.8" y="459.0" font-size="6.30" fill="#747474" text-anchor="end">-50%</text><text x="300.7" y="349.6" font-size="6.30" fill="#747474" text-anchor="middle">-25%</text><text x="364.8" y="349.6" font-size="6.30" fill="#747474" text-anchor="middle">-20%</text><text x="428.9" y="349.6" font-size="6.30" fill="#747474" text-anchor="middle">-15%</text><text x="493.0" y="349.6" font-size="6.30" fill="#747474" text-anchor="middle">-10%</text><text x="557.1" y="349.6" font-size="6.30" fill="#747474" text-anchor="middle">-5%</text><text x="621.1" y="349.6" font-size="6.30" fill="#747474" text-anchor="middle">0%</text><text x="685.2" y="349.6" font-size="6.30" fill="#747474" text-anchor="middle">5%</text><text x="749.3" y="349.6" font-size="6.30" fill="#747474" text-anchor="middle">10%</text><text x="813.4" y="349.6" font-size="6.30" fill="#747474" text-anchor="middle">15%</text><text x="877.5" y="349.6" font-size="6.30" fill="#747474" text-anchor="middle">20%</text><text x="559.7" y="477.9" font-size="12.46" fill="#595959" text-anchor="middle" textLength="233.5" lengthAdjust="spacingAndGlyphs">% Difference (Operator vs Comparable LAs)</text><g transform="translate(286.2,330) rotate(-90)"><text x="0.0" y="0.0" font-size="12.46" fill="#595959" text-anchor="middle" textLength="192.5" lengthAdjust="spacingAndGlyphs">% Difference (Operator vs National)</text></g><text x="442.0" y="286.4" font-size="10.00" fill="#404040" font-weight="700" textLength="42.7" lengthAdjust="spacingAndGlyphs">H&amp;F visits</text><text x="768.0" y="214.7" font-size="10.00" fill="#404040" font-weight="700" textLength="99.6" lengthAdjust="spacingAndGlyphs">Swimming lesson visits</text><text x="739.7" y="406.5" font-size="10.00" fill="#404040" font-weight="700" textLength="98.9" lengthAdjust="spacingAndGlyphs">Casual swimming visits</text><text x="311.3" y="460.5" font-size="10.00" fill="#404040" font-weight="700" textLength="62.7" lengthAdjust="spacingAndGlyphs">Pool hire visits</text><path d="M416.7 226L450.3 270.2" stroke="#7030a0" stroke-width="0.9"/><path d="M771.2 284.5L834.6 227.1" stroke="#00b0f0" stroke-width="0.9"/><path d="M430 404L369 431.5" stroke="#262626" stroke-width="0.9"/><path d="M788 415.2L815.8 454.4" stroke="#00b050" stroke-width="0.9"/><circle cx="450.3" cy="270.2" r="3.4" fill="#7030a0"/><circle cx="834.6" cy="227.1" r="3.4" fill="#00b0f0"/><circle cx="369" cy="431.5" r="3.4" fill="#000"/><circle cx="788" cy="415.2" r="3.4" fill="#00b050"/><rect x="298.5" y="206.3" width="118.2" height="86.4" rx="13" fill="#7030a0"/><text x="357.6" y="224.1" font-size="10.87" fill="#f4f4f4" text-anchor="middle" textLength="74.0" lengthAdjust="spacingAndGlyphs">Better than the</text><text x="357.6" y="238.3" font-size="10.87" fill="#f4f4f4" text-anchor="middle" textLength="79.2" lengthAdjust="spacingAndGlyphs">national average</text><text x="357.6" y="252.6" font-size="10.87" fill="#f4f4f4" text-anchor="middle" textLength="72.8" lengthAdjust="spacingAndGlyphs">but worse than</text><text x="357.6" y="266.9" font-size="10.87" fill="#f4f4f4" text-anchor="middle" textLength="84.4" lengthAdjust="spacingAndGlyphs">comparable Local</text><text x="357.6" y="281.1" font-size="10.87" fill="#f4f4f4" text-anchor="middle" textLength="53.0" lengthAdjust="spacingAndGlyphs">Authorities</text><rect x="653.1" y="249.1" width="118.1" height="71.7" rx="11" fill="#0c9bd2"/><text x="712.2" y="266.3" font-size="10.43" fill="#f4f4f4" text-anchor="middle" textLength="96.6" lengthAdjust="spacingAndGlyphs">Better than national</text><text x="712.2" y="280.8" font-size="10.43" fill="#f4f4f4" text-anchor="middle" textLength="91.0" lengthAdjust="spacingAndGlyphs">average and better</text><text x="712.2" y="295.3" font-size="10.43" fill="#f4f4f4" text-anchor="middle" textLength="81.6" lengthAdjust="spacingAndGlyphs">than comparable</text><text x="712.2" y="309.8" font-size="10.43" fill="#f4f4f4" text-anchor="middle" textLength="80.8" lengthAdjust="spacingAndGlyphs">Local Authorities</text><rect x="429.9" y="368.4" width="161.0" height="61.3" rx="9" fill="#000000"/><text x="510.4" y="385.0" font-size="11.30" fill="#f4f4f4" text-anchor="middle" textLength="116.4" lengthAdjust="spacingAndGlyphs">Worse than the national</text><text x="510.4" y="399.2" font-size="11.30" fill="#f4f4f4" text-anchor="middle" textLength="118.1" lengthAdjust="spacingAndGlyphs">average and comparable</text><text x="510.4" y="413.4" font-size="11.30" fill="#f4f4f4" text-anchor="middle" textLength="80.8" lengthAdjust="spacingAndGlyphs">Local Authorities</text><rect x="706" y="454.4" width="158.8" height="46.9" rx="9" fill="#0aab4e"/><text x="785.4" y="470.6" font-size="10.87" fill="#f4f4f4" text-anchor="middle" textLength="133.7" lengthAdjust="spacingAndGlyphs">Better than comparable LAs</text><text x="785.4" y="484.9" font-size="10.87" fill="#f4f4f4" text-anchor="middle" textLength="115.1" lengthAdjust="spacingAndGlyphs">but worse than national</text><text x="917.7" y="499.0" font-size="11.59" fill="#1f5f72" textLength="5.4" lengthAdjust="spacingAndGlyphs">7</text><use href="#logo" transform="translate(860.8,126.5)"/></g></g></svg>
<div class="a" style="left:21px;top:280.4px;width:125.4px;height:72.4px;border:1.8px solid #8c1b24"></div>
<svg style="left:23px;top:282.4px" width="121.4" height="68.4" viewBox="0 0 715 403"><use href="#s7"/></svg>
<svg style="left:22.9px;top:117.6px;box-shadow:0 0 1.5px rgba(0,0,0,.25)" width="121.6" height="68.6" viewBox="0 0 715 403"><rect x="0" y="0" width="715" height="403" fill="#fff"/><rect x="0" y="0" width="11" height="403" fill="url(#gbar)"/><use href="#logo" transform="translate(637.8,15.5)"/><text x="38.0" y="72.0" font-size="24.00" fill="#1b5466" font-weight="700" textLength="452.0" lengthAdjust="spacingAndGlyphs" stroke="#1b5466" stroke-width="1.2">Local Authority Benchmarking Tool</text><text x="38.0" y="98.0" font-size="15.00" fill="#8a8a8a" textLength="58.0" lengthAdjust="spacingAndGlyphs">Benefits</text><text x="38.0" y="126.0" font-size="15.00" fill="#505050" font-weight="700" textLength="628.0" lengthAdjust="spacingAndGlyphs">1. Provide you with quarterly benchmarked updates on performance based</text><text x="60.0" y="148.0" font-size="15.00" fill="#505050" font-weight="700" textLength="598.0" lengthAdjust="spacingAndGlyphs">on the most up to date ‘live’ validated income and participation data</text><text x="38.0" y="194.0" font-size="15.00" fill="#505050" font-weight="700" textLength="592.0" lengthAdjust="spacingAndGlyphs">2. Support the reconciliation process and negotiation of ongoing funding</text><text x="60.0" y="215.0" font-size="15.00" fill="#505050" font-weight="700" textLength="556.0" lengthAdjust="spacingAndGlyphs">support on a quarterly basis to ensure your local authority’s funding</text><text x="60.0" y="236.0" font-size="15.00" fill="#505050" font-weight="700" textLength="528.0" lengthAdjust="spacingAndGlyphs">support is optimised and creating the best possible conditions for</text><text x="60.0" y="257.0" font-size="15.00" fill="#505050" font-weight="700" textLength="214.0" lengthAdjust="spacingAndGlyphs">recovery and risk transfer</text><text x="38.0" y="303.0" font-size="15.00" fill="#505050" font-weight="700" textLength="592.0" lengthAdjust="spacingAndGlyphs">3. Understand the impact in the event of any recurrences of COVID-19 in</text><text x="60.0" y="324.0" font-size="15.00" fill="#505050" font-weight="700" textLength="500.0" lengthAdjust="spacingAndGlyphs">your local area and what this means for your leisure operating</text><text x="60.0" y="345.0" font-size="15.00" fill="#505050" font-weight="700" textLength="452.0" lengthAdjust="spacingAndGlyphs">partnership, recovery plans and future support funding.</text><text x="700.0" y="394.0" font-size="8.00" fill="#777">5</text></svg>
<svg style="left:22.9px;top:199.8px;box-shadow:0 0 1.5px rgba(0,0,0,.25)" width="121.6" height="68.6" viewBox="0 0 715 403"><rect x="0" y="0" width="715" height="403" fill="#fff"/><rect x="0" y="0" width="11" height="403" fill="url(#gbar)"/><use href="#logo" transform="translate(637.8,15.5)"/><rect x="189" y="0" width="526" height="403" fill="#0d2b4a"/><text x="206.0" y="40.0" font-size="26.00" fill="#fff" font-weight="700" textLength="412.0" lengthAdjust="spacingAndGlyphs" font-style="italic">LA Performance Monitoring Tool</text><text x="206.0" y="62.0" font-size="15.00" fill="#6cc04a" font-weight="700" textLength="165.0" lengthAdjust="spacingAndGlyphs">DEMO REPORT</text><rect x="625" y="22" width="60" height="6" fill="#7f93a8"/><rect x="640" y="34" width="45" height="6" fill="#7f93a8"/><rect x="189" y="76" width="526" height="95" fill="#fff"/><text x="450.0" y="96.0" font-size="11.00" fill="#0d2b4a" font-weight="700" text-anchor="middle" textLength="130.0" lengthAdjust="spacingAndGlyphs">INCOME ANALYSIS</text><rect x="310" y="104" width="280" height="4" fill="#999"/><text x="228.0" y="146.0" font-size="7.00" fill="#0d2b4a" font-weight="700" text-anchor="middle">YOUR</text><text x="228.0" y="156.0" font-size="7.00" fill="#0d2b4a" font-weight="700" text-anchor="middle">INCOME</text><rect x="265" y="117" width="120" height="18" rx="3" fill="#1b6f9e"/><rect x="298" y="123" width="55" height="4" fill="#cfe3f0"/><path d="M253 137H389L397 145V166H253Z" fill="#2aa6de"/><rect x="311" y="147" width="28" height="7" fill="#e8f0f6"/><rect x="418" y="117" width="120" height="18" rx="3" fill="#0d2b4a"/><rect x="451" y="123" width="55" height="4" fill="#cfe3f0"/><path d="M406 137H542L550 145V166H406Z" fill="#173e6c"/><rect x="464" y="147" width="28" height="7" fill="#e8f0f6"/><rect x="574" y="117" width="120" height="18" rx="3" fill="#1d7a34"/><rect x="607" y="123" width="55" height="4" fill="#cfe3f0"/><path d="M562 137H698L706 145V166H562Z" fill="#2ea84a"/><rect x="620" y="147" width="28" height="7" fill="#e8f0f6"/><rect x="394" y="190" width="50" height="4" fill="#6f8aa8"/><rect x="505" y="190" width="60" height="4" fill="#6f8aa8"/><rect x="624" y="190" width="50" height="4" fill="#6f8aa8"/><path d="M268 205.0H380L376 222.0H262Z" fill="#1f5d94"/><rect x="300" y="211.0" width="60" height="4" fill="#8fb0cc"/><path d="M386 205.0H456L452 221.0H382Z" fill="#fff"/><rect x="410" y="210.0" width="16" height="5" fill="#3cb04a"/><path d="M488 205.0H494L490 223.0H484Z" fill="#2aa6de"/><path d="M506 205.0H576L572 221.0H502Z" fill="#fff"/><rect x="530" y="210.0" width="16" height="5" fill="#d9443a"/><path d="M608 205.0H614L610 223.0H604Z" fill="#2aa6de"/><path d="M626 205.0H696L692 221.0H622Z" fill="#fff"/><rect x="650" y="210.0" width="16" height="5" fill="#d9443a"/><path d="M262 229.5H374L370 246.5H256Z" fill="#1f5d94"/><rect x="294" y="235.5" width="60" height="4" fill="#8fb0cc"/><path d="M380 229.5H450L446 245.5H376Z" fill="#fff"/><rect x="404" y="234.5" width="16" height="5" fill="#3cb04a"/><path d="M482 229.5H488L484 247.5H478Z" fill="#2aa6de"/><path d="M500 229.5H570L566 245.5H496Z" fill="#fff"/><rect x="524" y="234.5" width="16" height="5" fill="#e3a920"/><path d="M602 229.5H608L604 247.5H598Z" fill="#2aa6de"/><path d="M620 229.5H690L686 245.5H616Z" fill="#fff"/><rect x="644" y="234.5" width="16" height="5" fill="#d9443a"/><path d="M256 254.0H368L364 271.0H250Z" fill="#1f5d94"/><rect x="288" y="260.0" width="60" height="4" fill="#8fb0cc"/><path d="M374 254.0H444L440 270.0H370Z" fill="#fff"/><rect x="398" y="259.0" width="16" height="5" fill="#e3a920"/><path d="M476 254.0H482L478 272.0H472Z" fill="#2aa6de"/><path d="M494 254.0H564L560 270.0H490Z" fill="#fff"/><rect x="518" y="259.0" width="16" height="5" fill="#d9443a"/><path d="M596 254.0H602L598 272.0H592Z" fill="#2aa6de"/><path d="M614 254.0H684L680 270.0H610Z" fill="#fff"/><rect x="638" y="259.0" width="16" height="5" fill="#d9443a"/><path d="M250 278.5H362L358 295.5H244Z" fill="#1f5d94"/><rect x="282" y="284.5" width="60" height="4" fill="#8fb0cc"/><path d="M368 278.5H438L434 294.5H364Z" fill="#fff"/><rect x="392" y="283.5" width="16" height="5" fill="#3cb04a"/><path d="M470 278.5H476L472 296.5H466Z" fill="#2aa6de"/><path d="M488 278.5H558L554 294.5H484Z" fill="#fff"/><rect x="512" y="283.5" width="16" height="5" fill="#d9443a"/><path d="M590 278.5H596L592 296.5H586Z" fill="#2aa6de"/><path d="M608 278.5H678L674 294.5H604Z" fill="#fff"/><rect x="632" y="283.5" width="16" height="5" fill="#3cb04a"/><path d="M244 303.0H356L352 320.0H238Z" fill="#1f5d94"/><rect x="276" y="309.0" width="60" height="4" fill="#8fb0cc"/><path d="M362 303.0H432L428 319.0H358Z" fill="#fff"/><rect x="386" y="308.0" width="16" height="5" fill="#e3a920"/><path d="M464 303.0H470L466 321.0H460Z" fill="#2aa6de"/><path d="M482 303.0H552L548 319.0H478Z" fill="#fff"/><rect x="506" y="308.0" width="16" height="5" fill="#e3a920"/><path d="M584 303.0H590L586 321.0H580Z" fill="#2aa6de"/><path d="M602 303.0H672L668 319.0H598Z" fill="#fff"/><rect x="626" y="308.0" width="16" height="5" fill="#d9443a"/><path d="M238 327.5H350L346 344.5H232Z" fill="#1f5d94"/><rect x="270" y="333.5" width="60" height="4" fill="#8fb0cc"/><path d="M356 327.5H426L422 343.5H352Z" fill="#fff"/><rect x="380" y="332.5" width="16" height="5" fill="#3cb04a"/><path d="M458 327.5H464L460 345.5H454Z" fill="#2aa6de"/><path d="M476 327.5H546L542 343.5H472Z" fill="#fff"/><rect x="500" y="332.5" width="16" height="5" fill="#3cb04a"/><path d="M578 327.5H584L580 345.5H574Z" fill="#2aa6de"/><path d="M596 327.5H666L662 343.5H592Z" fill="#fff"/><rect x="620" y="332.5" width="16" height="5" fill="#d9443a"/><path d="M232 352.0H344L340 369.0H226Z" fill="#1f5d94"/><rect x="264" y="358.0" width="60" height="4" fill="#8fb0cc"/><path d="M350 352.0H420L416 368.0H346Z" fill="#fff"/><rect x="374" y="357.0" width="16" height="5" fill="#e3a920"/><path d="M452 352.0H458L454 370.0H448Z" fill="#2aa6de"/><path d="M470 352.0H540L536 368.0H466Z" fill="#fff"/><rect x="494" y="357.0" width="16" height="5" fill="#d9443a"/><path d="M572 352.0H578L574 370.0H568Z" fill="#2aa6de"/><path d="M590 352.0H660L656 368.0H586Z" fill="#fff"/><rect x="614" y="357.0" width="16" height="5" fill="#d9443a"/><path d="M226 376.5H338L334 393.5H220Z" fill="#1f5d94"/><rect x="258" y="382.5" width="60" height="4" fill="#8fb0cc"/><path d="M344 376.5H414L410 392.5H340Z" fill="#fff"/><rect x="368" y="381.5" width="16" height="5" fill="#e3a920"/><path d="M446 376.5H452L448 394.5H442Z" fill="#2aa6de"/><path d="M464 376.5H534L530 392.5H460Z" fill="#fff"/><rect x="488" y="381.5" width="16" height="5" fill="#e3a920"/><path d="M566 376.5H572L568 394.5H562Z" fill="#2aa6de"/><path d="M584 376.5H654L650 392.5H580Z" fill="#fff"/><rect x="608" y="381.5" width="16" height="5" fill="#d9443a"/></svg>
<svg style="left:22.9px;top:364.3px;box-shadow:0 0 1.5px rgba(0,0,0,.25)" width="121.6" height="68.6" viewBox="0 0 715 403"><rect x="0" y="0" width="715" height="403" fill="#fff"/><rect x="0" y="0" width="11" height="403" fill="url(#gbar)"/><use href="#logo" transform="translate(637.8,15.5)"/><text x="100.0" y="32.0" font-size="11.00" fill="#1b5466" font-weight="700" textLength="256.0" lengthAdjust="spacingAndGlyphs">INCOME PERFORMANCE BENCHMARK GRAPH</text><text x="98.0" y="66.0" font-size="11.00" fill="#111" font-weight="700" textLength="556.0" lengthAdjust="spacingAndGlyphs">The performance benchmark graph displays each KPI compared with the national and comparable LA averages in</text><text x="98.0" y="84.0" font-size="11.00" fill="#111" font-weight="700" textLength="560.0" lengthAdjust="spacingAndGlyphs">terms of a % difference. This highlights areas which are under/out-performing in relation to the rest of the sector.</text><path d="M98.0 90V353M167.6 90V353M237.2 90V353M306.9 90V353M376.5 90V353M446.1 90V353M515.8 90V353M585.4 90V353M655.0 90V353M98 90.0H655M98 113.9H655M98 137.8H655M98 161.7H655M98 185.6H655M98 209.5H655M98 233.5H655M98 257.4H655M98 281.3H655M98 305.2H655M98 329.1H655M98 353.0H655" stroke="#dcdcdc" stroke-width="1" fill="none" vector-effect="non-scaling-stroke"/><path d="M309 90V353M98 218H655" stroke="#c4c4c4" stroke-width="1" fill="none" vector-effect="non-scaling-stroke"/><g transform="translate(80,230) rotate(-90)"><text x="0.0" y="0.0" font-size="13.00" fill="#666" text-anchor="middle" textLength="200.0" lengthAdjust="spacingAndGlyphs">% Difference (Operator vs National)</text></g><text x="370.0" y="386.0" font-size="13.00" fill="#666" text-anchor="middle" textLength="232.0" lengthAdjust="spacingAndGlyphs">% Difference (Operator vs Comparable LAs)</text><text x="355.0" y="98.0" font-size="8.00" fill="#555" textLength="120.0" lengthAdjust="spacingAndGlyphs">Swimming lesson visits</text><text x="220.0" y="162.0" font-size="8.00" fill="#555" textLength="60.0" lengthAdjust="spacingAndGlyphs">Pool hire visits</text><text x="165.0" y="224.0" font-size="8.00" fill="#555" textLength="130.0" lengthAdjust="spacingAndGlyphs">Casual swimming visits</text><text x="590.0" y="244.0" font-size="8.00" fill="#555" textLength="100.0" lengthAdjust="spacingAndGlyphs">Swim visits</text><path d="M350 99L485 168" stroke="#7030a0" stroke-width="3"/><path d="M233 175L276 203" stroke="#0070c0" stroke-width="3"/><path d="M165 340L192 311" stroke="#00b0f0" stroke-width="3"/><path d="M571 346L590 326" stroke="#00b050" stroke-width="3"/><circle cx="350" cy="99" r="5" fill="#7030a0"/><circle cx="276" cy="203" r="5" fill="#0070c0"/><circle cx="192" cy="311" r="5" fill="#00b0f0"/><circle cx="590" cy="326" r="5" fill="#00b050"/><rect x="99" y="105" width="155" height="52" rx="10" fill="#0070c0"/><rect x="125" y="117.5" width="103" height="3.5" fill="#fff" opacity="0.6"/><rect x="125" y="129.5" width="103" height="3.5" fill="#fff" opacity="0.6"/><rect x="125" y="141.5" width="103" height="3.5" fill="#fff" opacity="0.6"/><rect x="486" y="136" width="155" height="59" rx="10" fill="#7030a0"/><rect x="512" y="152.0" width="103" height="3.5" fill="#fff" opacity="0.6"/><rect x="512" y="164.0" width="103" height="3.5" fill="#fff" opacity="0.6"/><rect x="512" y="176.0" width="103" height="3.5" fill="#fff" opacity="0.6"/><rect x="29" y="340" width="160" height="58" rx="10" fill="#00b0f0"/><rect x="55" y="355.5" width="108" height="3.5" fill="#fff" opacity="0.6"/><rect x="55" y="367.5" width="108" height="3.5" fill="#fff" opacity="0.6"/><rect x="55" y="379.5" width="108" height="3.5" fill="#fff" opacity="0.6"/><rect x="484" y="346" width="156" height="48" rx="10" fill="#00b050"/><rect x="510" y="362.5" width="104" height="3.5" fill="#fff" opacity="0.6"/><rect x="510" y="374.5" width="104" height="3.5" fill="#fff" opacity="0.6"/></svg>
<svg style="left:22.9px;top:446.8px;box-shadow:0 0 1.5px rgba(0,0,0,.25)" width="121.6" height="68.6" viewBox="0 0 715 403"><rect x="0" y="0" width="715" height="403" fill="#fff"/><rect x="0" y="0" width="11" height="403" fill="url(#gbar)"/><use href="#logo" transform="translate(637.8,15.5)"/><rect x="47" y="71" width="142" height="91" rx="14" fill="#13a1dc"/><rect x="47" y="229" width="142" height="90" rx="14" fill="#13a1dc"/><rect x="77" y="102" width="82" height="3.5" fill="#fff" opacity="0.55"/><rect x="77" y="260" width="82" height="3.5" fill="#fff" opacity="0.55"/><rect x="77" y="115" width="82" height="3.5" fill="#fff" opacity="0.55"/><rect x="77" y="273" width="82" height="3.5" fill="#fff" opacity="0.55"/><rect x="77" y="128" width="82" height="3.5" fill="#fff" opacity="0.55"/><rect x="77" y="286" width="82" height="3.5" fill="#fff" opacity="0.55"/><path d="M118 178V218M113 210L118 220L123 210" stroke="#13a1dc" stroke-width="3" fill="none"/><rect x="216" y="71" width="142" height="91" rx="14" fill="#0f8a3e"/><rect x="216" y="229" width="142" height="90" rx="14" fill="#0f8a3e"/><rect x="246" y="102" width="82" height="3.5" fill="#fff" opacity="0.55"/><rect x="246" y="260" width="82" height="3.5" fill="#fff" opacity="0.55"/><rect x="246" y="115" width="82" height="3.5" fill="#fff" opacity="0.55"/><rect x="246" y="273" width="82" height="3.5" fill="#fff" opacity="0.55"/><rect x="246" y="128" width="82" height="3.5" fill="#fff" opacity="0.55"/><rect x="246" y="286" width="82" height="3.5" fill="#fff" opacity="0.55"/><path d="M287 178V218M282 210L287 220L292 210" stroke="#0f8a3e" stroke-width="3" fill="none"/><rect x="385" y="71" width="142" height="91" rx="14" fill="#c00000"/><rect x="385" y="229" width="142" height="90" rx="14" fill="#c00000"/><rect x="415" y="102" width="82" height="3.5" fill="#fff" opacity="0.55"/><rect x="415" y="260" width="82" height="3.5" fill="#fff" opacity="0.55"/><rect x="415" y="115" width="82" height="3.5" fill="#fff" opacity="0.55"/><rect x="415" y="273" width="82" height="3.5" fill="#fff" opacity="0.55"/><rect x="415" y="128" width="82" height="3.5" fill="#fff" opacity="0.55"/><rect x="415" y="286" width="82" height="3.5" fill="#fff" opacity="0.55"/><path d="M456 178V218M451 210L456 220L461 210" stroke="#c00000" stroke-width="3" fill="none"/><rect x="553" y="71" width="142" height="91" rx="14" fill="#ffc000"/><rect x="553" y="229" width="142" height="90" rx="14" fill="#ffc000"/><rect x="583" y="102" width="82" height="3.5" fill="#fff" opacity="0.55"/><rect x="583" y="260" width="82" height="3.5" fill="#fff" opacity="0.55"/><rect x="583" y="115" width="82" height="3.5" fill="#fff" opacity="0.55"/><rect x="583" y="273" width="82" height="3.5" fill="#fff" opacity="0.55"/><rect x="583" y="128" width="82" height="3.5" fill="#fff" opacity="0.55"/><rect x="583" y="286" width="82" height="3.5" fill="#fff" opacity="0.55"/><path d="M624 178V218M619 210L624 220L629 210" stroke="#ffc000" stroke-width="3" fill="none"/><text x="700.0" y="394.0" font-size="8.00" fill="#777">9</text></svg>
<svg style="left:0;top:521px" width="1000" height="42" viewBox="0 521 1000 42"><text x="5.2" y="532.9" font-size="7.54" fill="#555" textLength="37.7" lengthAdjust="spacingAndGlyphs">Slide 7 of 10</text><text x="65.0" y="532.9" font-size="7.54" fill="#555" textLength="77.3" lengthAdjust="spacingAndGlyphs">English (United Kingdom)</text><g fill="none" stroke="#555" stroke-width="0.7"><path d="M725.6 531.2H736M725.6 533.2H736M725.6 535.2H736"/><path d="M728.8 527.8L730.8 526L732.8 527.8"/></g><text x="737.5" y="532.8" font-size="7.83" fill="#444" textLength="18.6" lengthAdjust="spacingAndGlyphs">Notes</text><rect x="768.4" y="523.6" width="25.2" height="13.2" fill="#d4d4d4"/><rect x="776" y="525.6" width="10.4" height="7.8" fill="none" stroke="#555" stroke-width="0.9"/><rect x="779.4" y="527.4" width="5.4" height="3.6" fill="none" stroke="#555" stroke-width="0.7"/><g fill="none" stroke="#555" stroke-width="0.8"><rect x="803" y="525.6" width="3.4" height="3.2"/><rect x="808" y="525.6" width="3.4" height="3.2"/><rect x="803" y="530.4" width="3.4" height="3.2"/><rect x="808" y="530.4" width="3.4" height="3.2"/></g><g fill="none" stroke="#555" stroke-width="0.8"><path d="M828.6 525.8H833V533.6H828.6ZM833 525.8H837.4V533.6H833Z"/><path d="M829.6 528H832M829.6 530H832M834 528H836.4M834 530H836.4" stroke-width="0.5"/></g><g fill="none" stroke="#555" stroke-width="0.8"><path d="M853.8 525.6H863M854.6 525.6V530.8H862.2V525.6M858.4 530.8V534.4M856.4 534.4H860.4"/></g><path d="M876.6 529.6H880.2" stroke="#777" stroke-width="0.7"/><path d="M884.5 529.6H949" stroke="#b8b8b8" stroke-width="0.7"/><path d="M915.2 527.8V531.4" stroke="#b8b8b8" stroke-width="0.6"/><rect x="911.2" y="526" width="2.6" height="7.4" fill="#6e6e6e"/><path d="M953 529.6H957.2M955.1 527.5V531.7" stroke="#777" stroke-width="0.7"/><text x="965.6" y="532.8" font-size="7.54" fill="#555" textLength="13.4" lengthAdjust="spacingAndGlyphs">86%</text><g fill="none" stroke="#555" stroke-width="0.8"><rect x="989.2" y="527" width="5.4" height="5.2"/><path d="M991.9 524.2V526.6M991.9 532.6V535M986.6 529.6H988.8M995 529.6H997.2"/><path d="M990.6 525.4L991.9 524.2L993.2 525.4M990.6 533.8L991.9 535L993.2 533.8M987.8 528.4L986.6 529.6L987.8 530.8M996 528.4L997.2 529.6L996 530.8"/></g><g fill="#fff"><path d="M10.6 546.1L14.9 545.5V549.9H10.6Z"/><path d="M15.6 545.4L20.8 544.7V549.9H15.6Z"/><path d="M10.6 550.6H14.9V555L10.6 554.4Z"/><path d="M15.6 550.6H20.8V555.8L15.6 555.1Z"/></g><g fill="none" stroke="#333" stroke-width="1"><circle cx="47" cy="548.4" r="3.3"/><path d="M44.6 550.8L40 555.4"/></g><text x="57.2" y="554.3" font-size="11.01" fill="#383838" textLength="85.3" lengthAdjust="spacingAndGlyphs">Type here to search</text><circle cx="270.3" cy="550.2" r="4.2" fill="none" stroke="#fff" stroke-width="1.2"/><g fill="none" stroke="#fff" stroke-width="0.9"><rect x="297.2" y="547.2" width="7" height="6.6"/><path d="M297.2 545.6H304.2M297.2 555.4H304.2M306.4 545.8V555.2"/></g><rect x="331" y="544.6" width="9.4" height="12" fill="#1a73c8"/><rect x="336" y="548.6" width="9.8" height="7.6" fill="#f3c38c"/><path d="M336 548.6L340.9 552.4L345.8 548.6" fill="none" stroke="#c07a30" stroke-width="0.7"/><rect x="328.6" y="546.6" width="7" height="7" fill="#0f5aa8"/><text x="332.1" y="552.4" font-size="5.80" fill="#fff" font-weight="700" text-anchor="middle" textLength="3.6" lengthAdjust="spacingAndGlyphs">o</text><rect x="322.8" y="561.6" width="25.2" height="1.4" fill="#8ab8e6"/><rect x="362.6" y="544.6" width="11.8" height="12" fill="#21a366"/><rect x="366" y="544.6" width="8.4" height="12" fill="#107c41"/><rect x="360.2" y="546.8" width="7.4" height="7.4" fill="#185c37"/><text x="363.9" y="552.8" font-size="6.09" fill="#fff" font-weight="700" text-anchor="middle" textLength="3.8" lengthAdjust="spacingAndGlyphs">x</text><path d="M393.4 545.8H399L400.4 547.4H406.6V556.2H393.4Z" fill="#e8a93a"/><rect x="393.4" y="549" width="13.2" height="7.2" fill="#f8d26a"/><rect x="396.6" y="551.6" width="6.6" height="2.6" fill="#2a8ad8"/><rect x="386.5" y="561.6" width="26.3" height="1.4" fill="#8ab8e6"/><circle cx="432" cy="550.4" r="6" fill="#dd4b39"/><path d="M432 550.4L426.8 553.4A6 6 0 0 0 432.8 556.35Z" fill="#1e9c50"/><path d="M432 550.4L437.6 548.2A6 6 0 0 1 432.8 556.35Z" fill="#fbc02d"/><circle cx="432" cy="550.4" r="2.7" fill="#fff"/><circle cx="432" cy="550.4" r="2" fill="#3a7de0"/><path d="M469.6 552.6H461.2C461.4 555 463.4 556 465.6 556C467 556 468.4 555.6 469.4 555V557.2C468.2 557.8 466.6 558 465.2 558C461.2 558 458.6 555.6 458.6 551.6C458.6 547.4 461.6 544.6 465 544.6C468.2 544.6 469.8 547 469.8 550.4ZM467 550.6C467 548.6 466.2 547 464.6 547C463 547 461.6 548.4 461.4 550.6Z" fill="#1e88e5"/><rect x="481.7" y="537.2" width="28" height="25.8" fill="#545454"/><circle cx="497.6" cy="550.4" r="6" fill="#ed6c47"/><path d="M497.6 544.4A6 6 0 0 1 503.6 550.4H497.6Z" fill="#ff8f6b"/><rect x="489.8" y="546.8" width="7.2" height="7.2" fill="#c43e1c"/><text x="493.4" y="552.6" font-size="6.38" fill="#fff" font-weight="700" text-anchor="middle" textLength="3.6" lengthAdjust="spacingAndGlyphs">P</text><rect x="481.7" y="561.6" width="28" height="1.4" fill="#8ab8e6"/><rect x="523" y="544.4" width="12.4" height="12.4" rx="1" fill="#b30b00"/><path d="M525.6 554.2C527.6 552 529.4 548.6 529.2 546.8C529 545.6 528 546.2 528.6 548.2C529.4 551.2 531.4 553 533.4 553.4C534.6 553.6 534.4 552.4 532 552.6C530 552.8 527.4 553.6 525.6 554.2Z" fill="none" stroke="#fff" stroke-width="0.8"/><rect x="556" y="544.6" width="10.4" height="12" fill="#41a5ee"/><rect x="556" y="548.6" width="10.4" height="4" fill="#2b7cd3"/><rect x="556" y="552.6" width="10.4" height="4" fill="#185abd"/><rect x="553" y="546.8" width="7.2" height="7.2" fill="#103f91"/><text x="556.6" y="552.6" font-size="5.22" fill="#fff" font-weight="700" text-anchor="middle" textLength="4.4" lengthAdjust="spacingAndGlyphs">w</text><rect x="549" y="561.6" width="24.8" height="1.4" fill="#8ab8e6"/><path d="M843.6 552L847.8 547.8L852 552" fill="none" stroke="#fff" stroke-width="0.9"/><g fill="none" stroke="#bdbdbd" stroke-width="0.8"><path d="M859 553A8 8 0 0 1 866.4 545.6M861 553A6 6 0 0 1 866.4 547.6M863 553A4 4 0 0 1 866.4 549.6"/></g><rect x="866" y="552" width="1.6" height="1.6" fill="#fff"/><rect x="875.4" y="547.2" width="8.6" height="5.6" fill="#fff"/><rect x="873.4" y="546" width="2.4" height="2" fill="#fff"/><rect x="884" y="548.8" width="0.9" height="2.4" fill="#fff"/><g fill="none" stroke="#fff" stroke-width="0.8"><path d="M889.6 548.6H891.4L894 546.4V555L891.4 552.8H889.6Z"/><path d="M895.6 548.8A2.6 2.6 0 0 1 895.6 552.6M897.2 547.4A4.6 4.6 0 0 1 897.2 554"/></g><g fill="#fff"><path d="M907 546L909.6 547.6L907 549.2L904.4 547.6Z"/><path d="M912.2 546L914.8 547.6L912.2 549.2L909.6 547.6Z"/><path d="M907 549.4L909.6 551L907 552.6L904.4 551Z"/><path d="M912.2 549.4L914.8 551L912.2 552.6L909.6 551Z"/><path d="M909.6 553L912 554.6L909.6 556L907.2 554.6Z"/></g><text x="941.5" y="546.8" font-size="9.28" fill="#fff" text-anchor="middle" textLength="18.0" lengthAdjust="spacingAndGlyphs">12:12</text><text x="941.5" y="559.4" font-size="9.28" fill="#fff" text-anchor="middle" textLength="39.6" lengthAdjust="spacingAndGlyphs">24/08/2020</text><path d="M973.4 545.2H983.6V553H977.6L975.2 555.4V553H973.4Z" fill="#fff"/><path d="M975.2 547.6H981.8M975.2 549.4H981.8M975.2 551.2H980" stroke="#464646" stroke-width="0.6"/><rect x="998" y="537" width="0.7" height="26" fill="#7a7a7a"/></svg>
</body></html>
